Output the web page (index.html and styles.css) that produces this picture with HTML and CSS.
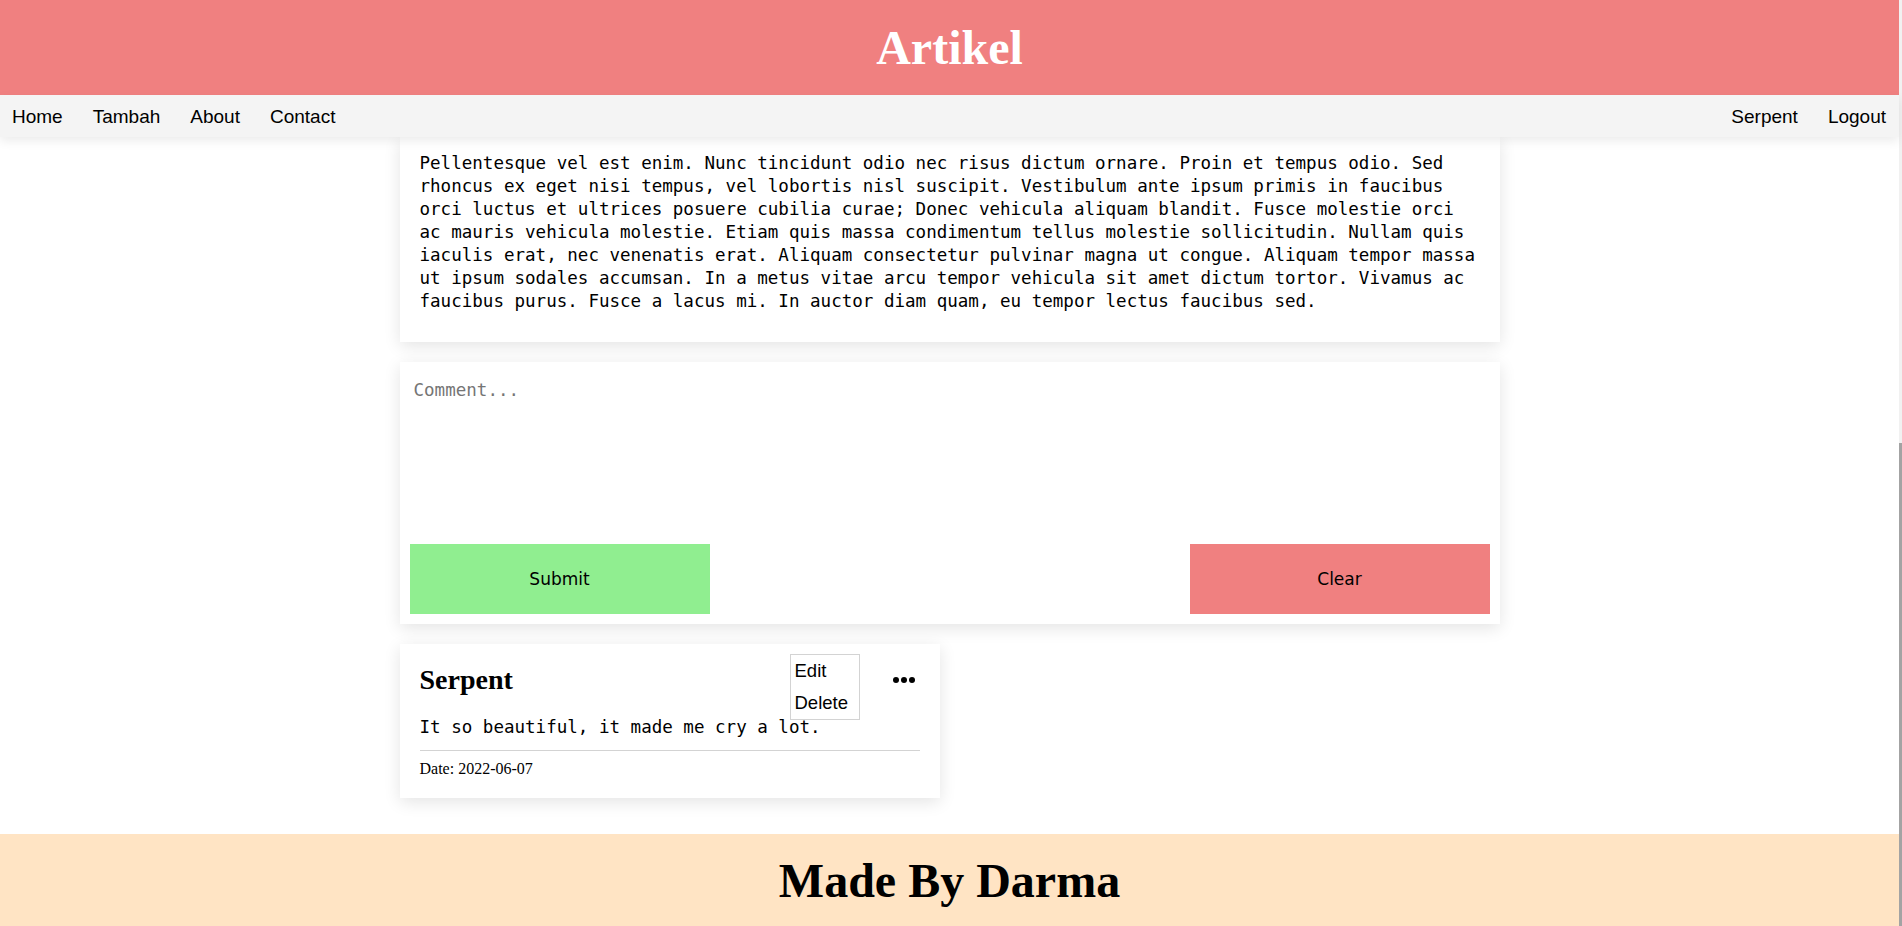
FILE: index.html
```html
<!DOCTYPE html>
<html lang="id">
<head>
<meta charset="utf-8">
<title>Artikel</title>
<link rel="stylesheet" href="styles.css">
</head>
<body>
<div class="page">
  <header class="site-header">
    <h1>Artikel</h1>
  </header>
  <nav class="topnav">
    <div class="nav-group">
      <a href="#">Home</a>
      <a href="#">Tambah</a>
      <a href="#">About</a>
      <a href="#">Contact</a>
    </div>
    <div class="nav-group">
      <a href="#">Serpent</a>
      <a href="#">Logout</a>
    </div>
  </nav>
  <main class="content">
    <article class="card article">
      <p>Pellentesque vel est enim. Nunc tincidunt odio nec risus dictum ornare. Proin et tempus odio. Sed rhoncus ex eget nisi tempus, vel lobortis nisl suscipit. Vestibulum ante ipsum primis in faucibus orci luctus et ultrices posuere cubilia curae; Donec vehicula aliquam blandit. Fusce molestie orci ac mauris vehicula molestie. Etiam quis massa condimentum tellus molestie sollicitudin. Nullam quis iaculis erat, nec venenatis erat. Aliquam consectetur pulvinar magna ut congue. Aliquam tempor massa ut ipsum sodales accumsan. In a metus vitae arcu tempor vehicula sit amet dictum tortor. Vivamus ac faucibus purus. Fusce a lacus mi. In auctor diam quam, eu tempor lectus faucibus sed.</p>
    </article>
    <form class="card comment-form">
      <textarea placeholder="Comment..."></textarea>
      <div class="form-actions">
        <button type="button" class="btn btn-submit">Submit</button>
        <button type="button" class="btn btn-clear">Clear</button>
      </div>
    </form>
    <div class="card comment">
      <div class="comment-head">
        <h3>Serpent</h3>
        <button type="button" class="more" aria-label="more"><span></span><span></span><span></span></button>
        <ul class="menu">
          <li>Edit</li>
          <li>Delete</li>
        </ul>
      </div>
      <p class="comment-text">It so beautiful, it made me cry a lot.</p>
      <hr class="divider">
      <p class="comment-date">Date: 2022-06-07</p>
    </div>
  </main>
  <footer class="site-footer">Made By Darma</footer>
</div>
<div class="scrollbar"><div class="thumb"></div></div>
</body>
</html>
```

FILE: styles.css
```css
html, body {
  margin: 0;
  padding: 0;
  background: #ffffff;
}

body {
  display: flex;
  align-items: stretch;
  height: 926px;
  overflow: hidden;
}

.page {
  flex: 1;
  min-width: 0;
  display: flex;
  flex-direction: column;
}

.site-header {
  background: #f08080;
  padding: 20px 0;
}

.site-header h1 {
  margin: 0;
  font-family: "Liberation Serif", "Times New Roman", serif;
  font-weight: bold;
  font-size: 48px;
  line-height: 55px;
  color: #ffffff;
  text-align: center;
}

.topnav {
  position: relative;
  z-index: 2;
  height: 42px;
  box-sizing: border-box;
  display: flex;
  justify-content: space-between;
  align-items: center;
  padding: 1px 13px 0 12px;
  background: #f4f4f4;
  box-shadow: 0 4px 10px rgba(0, 0, 0, 0.08);
}

.nav-group {
  display: flex;
  gap: 30px;
}

.nav-group a {
  font-family: "Liberation Sans", Arial, sans-serif;
  font-size: 19px;
  color: #000000;
  text-decoration: none;
}

.content {
  width: 1100px;
  margin: 0 auto;
  display: flex;
  flex-direction: column;
  align-items: stretch;
  gap: 20px;
  padding-bottom: 36px;
}

.card {
  background: #ffffff;
  box-sizing: border-box;
  box-shadow: 0 4px 16px rgba(0, 0, 0, 0.11);
}

.article {
  padding: 15px 20px 29px;
}

.article p {
  margin: 0;
  font-family: "DejaVu Sans Mono", "Liberation Mono", monospace;
  font-size: 17.55px;
  line-height: 23px;
  color: #000000;
}

.comment-form {
  padding: 10px;
  margin: 0;
}

.comment-form textarea {
  display: block;
  width: 100%;
  height: 162px;
  box-sizing: border-box;
  border: none;
  outline: none;
  resize: none;
  padding: 8px 4px;
  font-family: "DejaVu Sans Mono", "Liberation Mono", monospace;
  font-size: 17.55px;
  line-height: 20px;
  color: #000000;
  background: transparent;
}

.comment-form textarea::placeholder {
  color: #757575;
}

.form-actions {
  margin-top: 10px;
  display: flex;
  justify-content: space-between;
}

.btn {
  width: 300px;
  height: 70px;
  border: none;
  padding: 0;
  font-family: "DejaVu Sans", Tahoma, sans-serif;
  font-size: 17px;
  color: #000000;
}

.btn-submit {
  background: #90ee90;
}

.btn-clear {
  background: #f08080;
}

.comment {
  align-self: flex-start;
  width: 540px;
  padding: 20px;
}

.comment-head {
  position: relative;
  display: flex;
  justify-content: space-between;
  align-items: center;
}

.comment-head h3 {
  margin: 0;
  font-family: "Liberation Serif", "Times New Roman", serif;
  font-weight: bold;
  font-size: 28px;
  line-height: 32px;
  color: #000000;
}

.more {
  display: flex;
  gap: 2px;
  padding: 0 5px;
  margin: 0;
  border: none;
  background: none;
}

.more span {
  width: 6px;
  height: 6px;
  border-radius: 50%;
  background: #000000;
}

.menu {
  position: absolute;
  top: -10px;
  right: 60px;
  width: 70px;
  box-sizing: border-box;
  margin: 0;
  padding: 0;
  list-style: none;
  background: #ffffff;
  border: 1px solid #d3d3d3;
}

.menu li {
  padding: 5px 4px;
  font-family: "Liberation Sans", Arial, sans-serif;
  font-size: 18.5px;
  line-height: 22px;
  color: #000000;
}

.comment-text {
  margin: 20px 0 0;
  font-family: "DejaVu Sans Mono", "Liberation Mono", monospace;
  font-size: 17.55px;
  line-height: 23px;
  color: #000000;
}

.divider {
  margin: 11px 0 0;
  border: none;
  border-top: 1px solid #d3d3d3;
  height: 0;
}

.comment-date {
  margin: 8px 0 0;
  font-family: "Liberation Serif", "Times New Roman", serif;
  font-size: 16px;
  line-height: 19px;
  color: #000000;
}

.site-footer {
  background: #ffe4c4;
  padding: 19px 0 18px;
  font-family: "Liberation Serif", "Times New Roman", serif;
  font-weight: bold;
  font-size: 48px;
  line-height: 55px;
  color: #000000;
  text-align: center;
}

.scrollbar {
  width: 3px;
  flex: none;
  background: #f1f1f1;
}

.scrollbar .thumb {
  margin-top: 443px;
  height: 483px;
  background: #a3a3a3;
}
```
